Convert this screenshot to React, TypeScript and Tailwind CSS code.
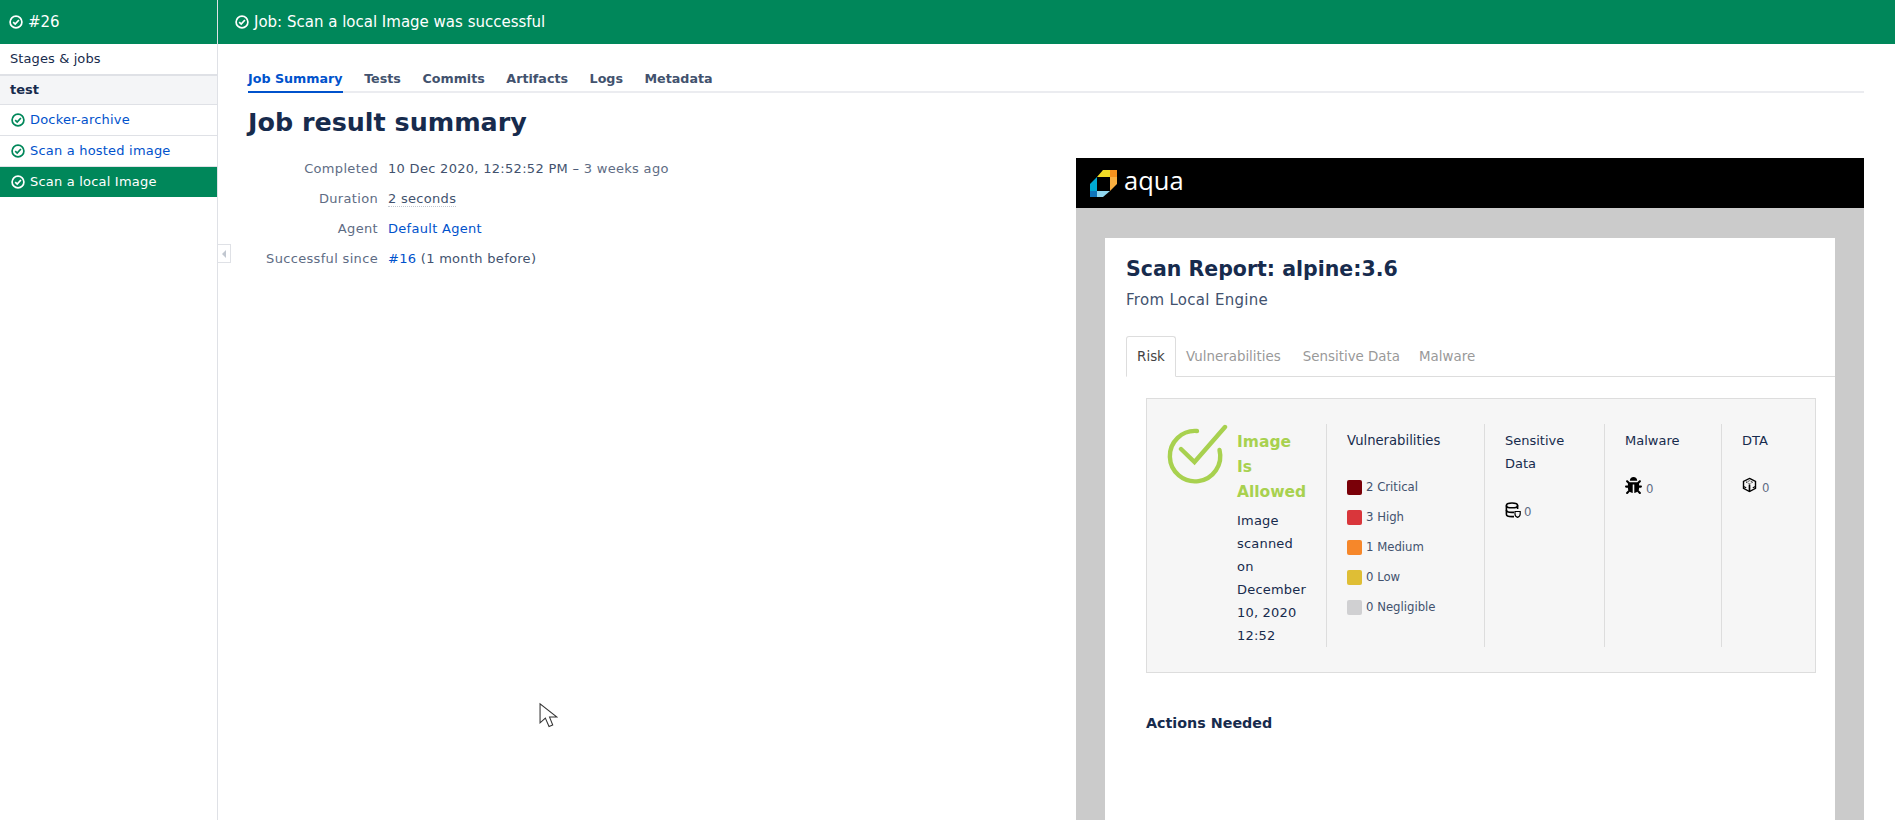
import React from "react";
import { FaBug } from "react-icons/fa";

const font = { fontFamily: '"DejaVu Sans", sans-serif' };

function CheckCircle({ className }: { className: string }) {
  return (
    <svg viewBox="0 0 14 14" className={className} fill="none" stroke="currentColor">
      <circle cx="7" cy="7" r="5.9" strokeWidth="1.7" />
      <path d="M4.2 7.2 L6.2 9.1 L9.9 5" strokeWidth="1.7" />
    </svg>
  );
}

function Logo() {
  return (
    <svg viewBox="2 2 27 27" className="w-[29px] h-[27px]">
      <polygon points="9,9 15,2 22,2 22,9" fill="#f1dc27" />
      <polygon points="22,2 29,2 29,9 22,9" fill="#f6921e" />
      <polygon points="22,9 29,9 29,16 22,23 22,16" fill="#fbb040" />
      <polygon points="9,23 22,23 15,29 9,29" fill="#8fd6ef" />
      <polygon points="2,23 9,23 9,29 2,29" fill="#0f75bc" />
      <polygon points="2,16 9,9 9,23 2,23" fill="#00aad4" />
    </svg>
  );
}

function DbShield() {
  return (
    <svg viewBox="0 0 16 16" className="w-[16px] h-[16px]" fill="none" stroke="#000" strokeWidth="1.6">
      <ellipse cx="7" cy="3.4" rx="5.6" ry="2.4" />
      <path d="M1.4 3.4V12.2C1.4 13.6 4 14.6 7 14.6H9" />
      <path d="M1.4 8C1.4 9.4 4 10.4 7 10.4H9" />
      <path d="M12.6 3.4V7" />
      <path d="M10 9.5H15.2V12C15.2 13.8 13.6 15 12.6 15.4 11.6 15 10 13.8 10 12Z" strokeWidth="1.2" />
    </svg>
  );
}

function Cube() {
  return (
    <svg viewBox="0 0 16 16" className="w-[15px] h-[16px]" fill="none" stroke="#000" strokeWidth="1.5">
      <path d="M8 1 L14.4 4.2 V11.6 L8 15 L1.6 11.6 V4.2 Z" />
      <path d="M4.6 5 L8 3.4 L11.4 5 L8 6.8 Z" strokeWidth="1" strokeDasharray="1 0.8" />
      <path d="M8 7.5 V15" strokeWidth="1.8" />
      <path d="M1.6 9.5 L4.5 11 M14.4 9.5 L11.5 11" strokeWidth="1.2" />
    </svg>
  );
}

function Cursor() {
  return (
    <svg viewBox="0 0 18 24" className="w-[19px] h-[27px]">
      <path d="M1 1 V19 L6 14.5 L9.5 22.5 L13 21 L10 13.5 L17 13.5 Z" fill="#fff" stroke="#333" strokeWidth="1" />
    </svg>
  );
}

function SideRow({ label, active }: { label: string; active?: boolean }) {
  return (
    <div
      className={
        active
          ? "h-[30px] flex items-center gap-[5px] pl-[11px] bg-[#00875a] text-white tracking-[0.2px]"
          : "h-[31px] flex items-center gap-[5px] pl-[11px] border-b border-[#dfe1e6] text-[#0052cc] tracking-[0.2px]"
      }
    >
      <CheckCircle className={active ? "w-[14px] h-[14px] text-white" : "w-[14px] h-[14px] text-[#00875a]"} />
      <span>{label}</span>
    </div>
  );
}

function InfoRow({ label, children }: { label: string; children: React.ReactNode }) {
  return (
    <div className="flex h-[30px] items-center">
      <div className="w-[130px] text-right text-[#5e6c84] tracking-[0.33px]">{label}</div>
      <div className="ml-[10px] text-[#42526e] tracking-[0.3px]">{children}</div>
    </div>
  );
}

const swatches = [
  ["bg-[#7a0008]", "2 Critical"],
  ["bg-[#d9363b]", "3 High"],
  ["bg-[#f6872a]", "1 Medium"],
  ["bg-[#dfbe35]", "0 Low"],
  ["bg-[#d0d0d2]", "0 Negligible"],
];

export default function App() {
  return (
    <div style={font} className="h-screen w-full overflow-hidden flex bg-white text-[13px] text-[#172b4d]">
      <aside className="w-[218px] shrink-0 border-r border-[#dfe1e6] flex flex-col">
        <div className="h-[44px] bg-[#00875a] text-white text-[15px] flex items-center gap-[5px] pl-[9px]">
          <CheckCircle className="w-[14px] h-[14px]" />
          <span>#26</span>
        </div>
        <div className="h-[32px] flex items-center pl-[10px] border-b-2 border-[#dfe1e6] tracking-[0.1px]">Stages &amp; jobs</div>
        <div className="h-[29px] flex items-center pl-[10px] bg-[#f4f5f7] border-b border-[#dfe1e6] font-bold">test</div>
        <SideRow label="Docker-archive" />
        <SideRow label="Scan a hosted image" />
        <SideRow label="Scan a local Image" active />
      </aside>
      <main className="flex-1 min-w-0 flex flex-col relative">
        <div className="h-[44px] shrink-0 bg-[#00875a] text-white text-[15px] flex items-center gap-[5px] pl-[17px]">
          <CheckCircle className="w-[14px] h-[14px]" />
          <span>Job: Scan a local Image was successful</span>
        </div>
        <div className="absolute left-0 top-[244px] w-[13px] h-[19px] border border-l-0 border-[#dfe1e6] bg-white flex items-center justify-center">
          <div className="w-0 h-0 border-y-[4px] border-y-transparent border-r-[4px] border-r-[#c1c7d0]" />
        </div>
        <div className="pl-[30px] pr-[31px] pt-[23px]">
          <div className="flex gap-[21.5px] border-b-2 border-[#ebecf0] font-bold text-[12.7px] text-[#42526e] h-[26px] pt-[2px]">
            <div className="h-[24px] border-b-2 border-[#0052cc] text-[#0052cc]">Job Summary</div>
            <div>Tests</div>
            <div>Commits</div>
            <div>Artifacts</div>
            <div>Logs</div>
            <div>Metadata</div>
          </div>
          <h1 className="text-[25.4px] leading-[32px] font-bold mt-[13px]">Job result summary</h1>
          <div className="flex mt-[16px]">
            <div className="w-[828px] shrink-0">
              <InfoRow label="Completed">
                10 Dec 2020, 12:52:52 PM – <span className="text-[#5e6c84]">3 weeks ago</span>
              </InfoRow>
              <InfoRow label="Duration">
                <span className="border-b border-dotted border-[#c1c7d0]">2 seconds</span>
              </InfoRow>
              <InfoRow label="Agent">
                <span className="text-[#0052cc]">Default Agent</span>
              </InfoRow>
              <InfoRow label="Successful since">
                <span className="text-[#0052cc]">#16</span> (1 month before)
              </InfoRow>
            </div>
            <div className="flex-1 min-w-0 mt-[4px] bg-[#cbcbcb] flex flex-col h-[700px]">
              <div className="h-[50px] bg-black flex items-center gap-[6px] pl-[13px]">
                <Logo />
                <span className="text-white text-[25.5px] leading-none font-medium font-['Open_Sans',sans-serif] pb-[4px]">aqua</span>
              </div>
              <div className="mx-[29px] mt-[30px] flex-1 bg-white pt-[17px]">
                <div className="pl-[21px]">
                  <h2 className="text-[20.5px] leading-[28px] font-bold">Scan Report: alpine:3.6</h2>
                  <p className="text-[15px] tracking-[0.3px] text-[#42526e] mt-[7px] leading-[20px]">From Local Engine</p>
                </div>
                <div className="mt-[26px] ml-[21px] flex h-[41px] border-b border-[#dddddd] text-[#999999] text-[13.4px]">
                  <div className="w-[50px] h-[41px] pt-[2px] border border-[#dddddd] border-b-white rounded-t-[3px] bg-white text-[#444] flex items-center justify-center">Risk</div>
                  <div className="ml-[10px] pt-[2px] flex items-center">Vulnerabilities</div>
                  <div className="ml-[22px] pt-[2px] flex items-center">Sensitive Data</div>
                  <div className="ml-[19px] pt-[2px] flex items-center">Malware</div>
                </div>
                <div className="mt-[21px] ml-[41px] mr-[19px] h-[275px] bg-[#f6f6f6] border border-[#dddddd] pt-[25px] flex">
                  <div className="w-[180px] h-[223px] flex border-r border-[#dddddd]">
                    <svg viewBox="0 0 62 62" className="w-[62px] h-[62px] ml-[20px] text-[#a8d14f] shrink-0" fill="none" stroke="currentColor" strokeWidth="4.4" strokeLinecap="round">
                      <path d="M30 7 A25.2 25.2 0 1 0 52.5 26" />
                      <path d="M14 25 L27.5 38 L58 3" />
                    </svg>
                    <div className="ml-[8px] pr-[4px]">
                      <div className="text-[#a8d14f] font-bold text-[15.5px] leading-[25px] mt-[6px]">
                        Image<br />Is<br />Allowed
                      </div>
                      <div className="text-[13px] tracking-[0.2px] leading-[23px] text-[#172b4d] mt-[4px]">
                        Image<br />scanned<br />on<br />December<br />10, 2020<br />12:52
                      </div>
                    </div>
                  </div>
                  <div className="w-[158px] h-[223px] border-r border-[#dddddd] pl-[20px]">
                    <div className="text-[13.2px] leading-[23px] mt-[5px]">Vulnerabilities</div>
                    <div className="mt-[28px] flex flex-col gap-[15px]">
                      {swatches.map(([color, label]) => (
                        <div key={label} className="flex items-center gap-[4px] h-[15px] text-[11.7px] text-[#42526e]">
                          <span className={`w-[15px] h-[15px] rounded-[2px] ${color}`} />
                          {label}
                        </div>
                      ))}
                    </div>
                  </div>
                  <div className="w-[120px] h-[223px] border-r border-[#dddddd] pl-[20px]">
                    <div className="leading-[23px] mt-[5px]">Sensitive<br />Data</div>
                    <div className="mt-[27px] flex items-end gap-[3px] text-[11.7px] text-[#5e6c84]"><DbShield /><span className="leading-[13px] -mb-[1px]">0</span></div>
                  </div>
                  <div className="w-[117px] h-[223px] border-r border-[#dddddd] pl-[20px]">
                    <div className="leading-[23px] mt-[5px]">Malware</div>
                    <div className="mt-[25px] flex items-end gap-[4px] text-[11.7px] text-[#5e6c84]"><FaBug className="w-[17px] h-[17px] text-black" /><span className="leading-[13px] -mb-[2px]">0</span></div>
                  </div>
                  <div className="pl-[20px]">
                    <div className="leading-[23px] mt-[5px]">DTA</div>
                    <div className="mt-[25px] flex items-end gap-[5px] text-[11.7px] text-[#5e6c84]"><Cube /><span className="leading-[13px] -mb-[2px]">0</span></div>
                  </div>
                </div>
                <div className="ml-[41px] mt-[40px] font-bold text-[14.3px] leading-[20px]">Actions Needed</div>
              </div>
            </div>
          </div>
        </div>
        <div className="absolute left-[321px] top-[702px]"><Cursor /></div>
      </main>
    </div>
  );
}
